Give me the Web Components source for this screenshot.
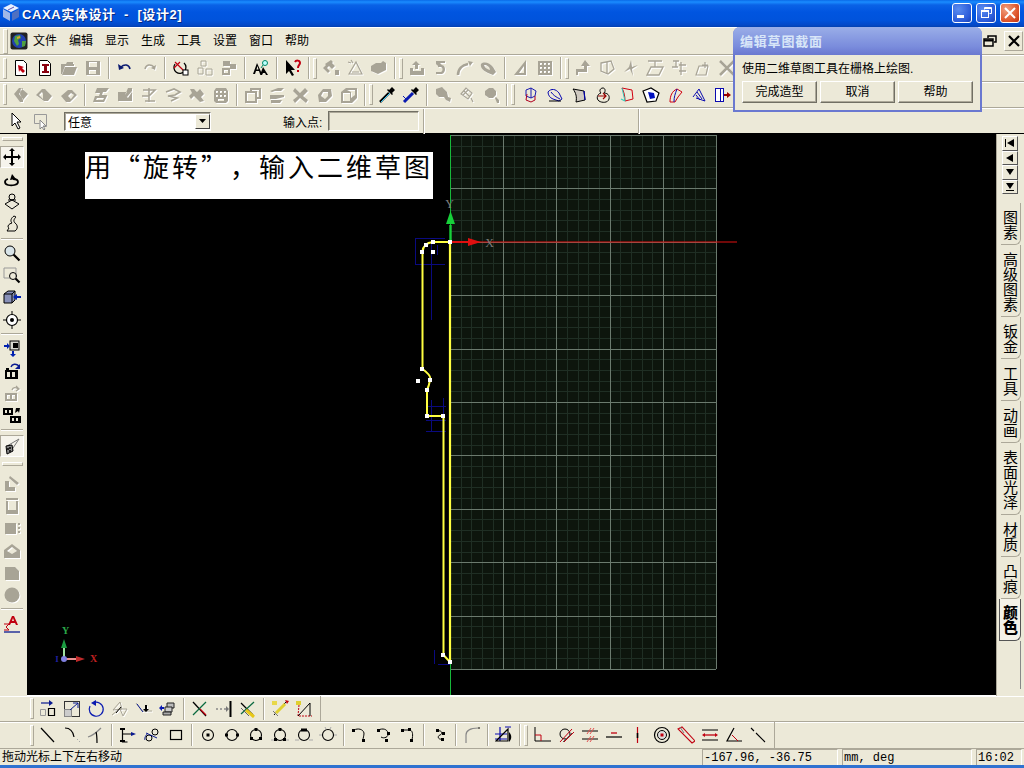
<!DOCTYPE html>
<html lang="zh-CN">
<head>
<meta charset="utf-8">
<title>CAXA实体设计</title>
<style>
html, body { margin: 0; padding: 0; background: #ece9d8; overflow: hidden; }
body { font: 12px "Liberation Sans", "Noto Sans CJK SC", sans-serif; color: #000; }
</style>
</head>
<body>
<cad-window>
  <cad-titlebar slot="top">CAXA实体设计 &nbsp;-&nbsp; [设计2]</cad-titlebar>
  <cad-menubar slot="top">
    <cad-menuitem>文件</cad-menuitem><cad-menuitem>编辑</cad-menuitem><cad-menuitem>显示</cad-menuitem><cad-menuitem>生成</cad-menuitem><cad-menuitem>工具</cad-menuitem><cad-menuitem>设置</cad-menuitem><cad-menuitem>窗口</cad-menuitem><cad-menuitem>帮助</cad-menuitem>
  </cad-menubar>
  <cad-toolbar slot="top" size="27" items="grip doc1 doc2 open save sep undo redo sep rot obj1 obj2 sep tree sep help sep grip a1 a2 a3 sep grip up a5 a6 a7 sep a8 a9 sep grip a10 a11 a12 a13 a14 a15 a16"></cad-toolbar>
  <cad-toolbar slot="top" size="26" items="grip b1 b2 b3 sep c1 c2 c3 c4 c5 c6 sep e1 e2 e3 e4 e5 sep grip drop1 drop2 sep f1 f2 f3 sep grip _2 h1 h2 h3 h4 h5 h6 h7 h8 h9"></cad-toolbar>
  <cad-inputbar slot="top"></cad-inputbar>

  <cad-toolbar slot="left" vertical items="_3 vgrip _5 !move orbit look walk sep zoom zoomw fit target sep cam1 cam2 cam3 cam4 sep _2 !light grip2 g1 g2 g3 g4 g5 g6 sep sigma"></cad-toolbar>
  <cad-viewport slot="center"><cad-note>用“旋转”，输入二维草图</cad-note></cad-viewport>
  <cad-tabs slot="right">
    <cad-tab>图素</cad-tab><cad-tab>高级图素</cad-tab><cad-tab>钣金</cad-tab><cad-tab>工具</cad-tab><cad-tab>动画</cad-tab><cad-tab>表面光泽</cad-tab><cad-tab>材质</cad-tab><cad-tab>凸痕</cad-tab><cad-tab active>颜色</cad-tab>
  </cad-tabs>

  <cad-toolbar slot="bottom" size="26" lead="30" end items="grip m1 m2 m3 m4 m5 m6 sep x1 x2 x3 sep y1 y2 _4"></cad-toolbar>
  <cad-toolbar slot="bottom" size="27" lead="30" end items="grip l1 l2 l3 sep p1 p2 p3 sep q1 q2 q3 q4 q5 q6 sep r1 r2 r3 sep r4 sep r5 sep ruler sep grip k1 k2 k3 k4 k5 k6 k7 k8 k9 k10 _4"></cad-toolbar>
  <cad-statusbar slot="bottom">拖动光标上下左右移动</cad-statusbar>

  <cad-dialog slot="float" heading="编辑草图截面">
    使用二维草图工具在栅格上绘图.
    <cad-button slot="actions">完成造型</cad-button>
    <cad-button slot="actions">取消</cad-button>
    <cad-button slot="actions">帮助</cad-button>
  </cad-dialog>
</cad-window>

<script>
const CJK = '"Liberation Sans", "Noto Sans CJK SC", sans-serif';
const G = '#a8a496';

// shorthand for the little 18x18 toolbar pictures
const s = (d, c = '#000', w = 1) => `<path d="${d}" fill="none" stroke="${c}" stroke-width="${w}"/>`;
const f = (d, c = '#000') => `<path d="${d}" fill="${c}" fill-rule="evenodd"/>`;
const g = d => f(d, G);
const gs = (d, w = 1.5) => s(d, G, w);
const page = '<path d="M3.5 1.5h8l3 3v12h-11z" fill="#fff" stroke="#000"/>';
const ring = '<circle cx="9" cy="9" r="5.5" fill="none" stroke="#000" stroke-width="1.1"/>';

const ICONS = {
  // main toolbar
  doc1: page + f('M6 6l6 2-2 1 3 3-2 2-3-3-1 2z', '#c00010'),
  doc2: page + f('M6 5h7v2h-2v5h2v2H6v-2h2V7H6z', '#8a0010'),
  open: g('M1 5h5l1-2h6v2h1v2H5l-3 8H1zM5 8h12l-3 8H2z'),
  save: g('M2 2h14v14H2zM5 3v5h8V3zM5 11v4h7v-4z'),
  undo: s('M5 8c3-3 8-3 9 2', '#0a1a70', 1.6) + f('M2 5l1 6 5-2z', '#0a1a70'),
  redo: gs('M14 8c-3-3-8-3-9 2') + g('M16 6l-1 5-4-2z'),
  rot: s('M3 5a6 6 0 1 0 9-1', '#000', 1.3) + s('M3 3l10 10M2 9l6-6', '#c00010', 1.2) + '<rect x="11" y="11" width="5" height="5" fill="#fff" stroke="#000"/>',
  obj1: gs('M5 2h5v5H5zM2 9h5v6H2zM10 10h6v6h-6z', 1),
  obj2: g('M3 2h7v5H3zM10 5h6v5h-6zM2 9h8v7H2zM4 11v3h4v-3z'),
  tree: f('M5 4L1 15h2l1-3h3l1 3h2zM4.5 10.5L5.5 7l1 3.5z') + f('M11 8l-3 8h2l1-2h2l1 2h2z') + '<circle cx="13" cy="4" r="2.5" fill="#bff" stroke="#086"/>' + s('M11 6L9 9', '#086'),
  help: f('M2 1v14l3-3 3 5 2-1-3-5h4z') + s('M11 3c1-2 5-2 5 1 0 2-2 2-2 5', '#c00010', 2) + f('M13 11h2v2h-2z', '#c00010'),
  a1: g('M9 1l2 2-1 1 3 3-3 3-3-3-2 2 3 3-2 2-5-5 3-3-1-1zM13 11h4v5h-4z'),
  a2: gs('M5 1l2 3M2 3l3 1M3 15L10 3l6 12zM6 13h7', 1.2),
  a3: g('M1 7l5-3h5l2-2 3 2v7l-8 4-7-3z'),
  up: g('M8 2l4 4H10v4H7V6H4zM2 9h3v3h8V9h3v7H2z'),
  a5: g('M4 2h9v2H8l2 2c4 1 4 7 0 9H4v-2h5c2-1 2-4 0-5H6V7L4 5z'),
  a6: gs('M2 16c0-6 4-10 10-11', 2.5) + g('M12 2l5 1-3 4z'),
  a7: g('M1 5c3-3 9-1 12 3l3 5-3 3-5-2c-4-2-8-5-7-9zM4 6c1 3 3 4 6 5 0-3-3-5-6-5z'),
  a8: g('M14 1v15H2zM12 7l-5 7h5z'),
  a9: g('M2 2h14v14H2zM4 4v2h2V4zM8 4v2h2V4zM12 4v2h2V4zM4 8v2h2V8zM8 8v2h2V8zM12 8v2h2V8zM4 12v2h2v-2zM8 12v2h2v-2zM12 12v2h2v-2z'),
  a10: g('M11 1l5 6h-3v6H4v3H2v-6h8V7H7z'),
  a11: gs('M3 4l10-2 3 8-6 5-7-3zM9 3v12', 1.3),
  a12: g('M9 1l1 7 6-2-6 4 1 7-3-7-6 3 5-5z'),
  a13: gs('M2 2h14M5 8h12l-4 8H1zM9 2v6', 1.3),
  a14: gs('M3 2h6M6 2v6M2 8h6M11 3v13M9 6h7M9 12h7', 1.3),
  a15: gs('M2 16l3-9h9l-2 9zM11 3v6M8 6h6', 1.2),
  a16: gs('M2 2l14 14M16 2L2 16', 2.5),
  b1: g('M2 8l5-6h4L7 8l4 5v3H8zM9 2l7 6-5 6-3-6z'),
  b2: g('M0 9l6-6h3l7 7-4 5H8zM6 6L3 9l4 4V8z'),
  b3: g('M1 10l7-6h4l5 5-7 7H6zM8 10l3-3 3 2-3 4z'),
  c1: g('M5 2h12l-3 4h-3l-1 3h5v1l-3 6H1l2-6h4l1-3H3zM5 12l-1 2h7l1-2z'),
  c2: g('M2 6h9L9 9l3 3 4-6v9H2zM12 2h4v3l-5 6-2-2z'),
  c3: gs('M3 4h12l-6 6H2M9 2v14M5 15h10', 1.6),
  c4: gs('M2 6l8-3 6 3-5 3-7 1 9 2-6 3', 1.7),
  c5: g('M2 3h4l3 3 3-3 4 5-3 3 3 4-4 1-6-6-3 3-2-3 3-3z'),
  c6: g('M4 2h10l2 3v10l-2 2H4l-2-2V5zM4 5v2h2V5zM8 5v2h2V5zM12 5v2h2V5zM4 9v2h2V9zM8 9v2h2V9zM12 9v2h2V9zM6 13v2h6v-2z'),
  e1: g('M1 5h5V2h11v11h-4v4H1zM8 4v1h5v6h2V4zM3 7v8h8V7z'),
  e2: g('M2 5l8-3h6l-3 3H7L4 6zM2 9h14v2l-8 2H2zM3 14h11l-2 3H3z'),
  e3: g('M3 2l5 5 5-5 3 3-5 5 5 4-2 3-6-5-5 5-2-3 5-4-5-5z'),
  e4: g('M2 9l5-6h8l1 7-6 6H3zM6 8l-1 2 4 3 3-3V6H7z'),
  e5: g('M1 6l5-4h11v10l-5 5H1zM3 7v8h7V7zM11 6v6l4-3V4H7z'),
  drop1: s('M2 16L11 7', '#000', 2.5) + s('M3 16l9-9', '#3cf', 1) + f('M11 4l3-3 3 3-3 3 1 1-1 1-5-5 1-1z'),
  drop2: s('M2 16L11 7', '#0a1ab0', 3) + f('M11 4l3-3 3 3-3 3 1 1-1 1-5-5 1-1z') + s('M1 10l4 4', '#0a1ab0'),
  f1: g('M2 3l6-2 5 5 1 5 3 1-1 4-4-2-2-3H5L2 8z'),
  f2: gs('M3 8l5-6 6 5-4 6zM6 5l6 6M5 9l5-5M13 12l2 4', 1.2),
  f3: g('M3 5l4-3h4l3 3v4l-3 3H7L3 9zM13 12l1-1 3 3v3h-2z'),
  h1: s('M4 4l5-2 5 3-1 5-4 2-5-2zM9 2v10', '#1a1ab0', 1) + s('M5 8l-1 6 5 2 4-2V10', '#b00020', 1),
  h2: s('M2 6c3-4 8-3 11 1l3 6-3 2-6-2C4 12 2 9 2 6zM5 6c2 3 5 5 9 7', '#0a0ab0', 1) + s('M3 15h12', '#000'),
  h3: '<path d="M3 3l11 2 1 9-9 2c1-5 0-9-3-13z" fill="#cfc9c0" stroke="#000"/>' + s('M14 5l1 9', '#00a', 1.2),
  h4: s('M9 2c-3 0-4 3-2 5-4 1-5 6-2 8s9 2 10-2-2-6-5-6c2-2 1-5-1-5z', '#000', 1) + s('M4 10h8M9 7l3 3-3 3', '#900', 1.2),
  h5: s('M4 2l10 2 1 9-8 2C7 10 6 6 4 2z', '#d00010', 1) + s('M3 13l4 2', '#3cb', 1.2) + s('M4 2l3 13', '#3cb'),
  h6: '<path d="M1 5l8-3 8 5-3 8-9 1z" fill="#fff" stroke="#000" stroke-width="1.2"/>' + f('M6 6l6 1 1 5-5 1z', '#0010c0'),
  h7: s('M4 16c0-6 2-11 7-13l5 3-4 5-3 5z', '#d00010', 1) + s('M8 16c0-5 1-8 3-13', '#0a0ab0', 1),
  h8: s('M3 11L9 3l6 12-9-3', '#0a0ab0', 1) + s('M6 9l4 5M7 6l5 7', '#0a0ab0', 1),
  h9: '<rect x="1.5" y="2.5" width="5" height="13" fill="#fff" stroke="#0a0ab0"/><rect x="6.5" y="2.5" width="3" height="13" fill="#fff" stroke="#0a0ab0"/>' + f('M10 8h3V6l4 3-4 3v-2h-3z', '#900'),

  // left dock
  move: f('M9 0l3 3h-2v5h5V6l3 3-3 3v-2h-5v5h2l-3 3-3-3h2v-5H3v2L0 9l3-3v2h5V3H6z'),
  orbit: s('M5 8c-4 1-4 5 0 6s10 0 10-3c0-2-2-3-5-3', '#000', 1.8) + f('M9 3l4 5-6 1z'),
  look: s('M9 1a3 3 0 0 1 0 6 3 3 0 0 1 0-6zM5 7h8M2 11l7-4 7 4-7 5z', '#000', 1),
  walk: s('M11 1C8 3 7 6 9 8c-4 1-5 4-3 5l-2 3h8c3-2 3-6 0-8-2-2-1-4 1-6z', '#000', 1),
  zoom: '<circle cx="7" cy="7" r="5" fill="#d8e4e8" stroke="#000"/>' + s('M10.5 10.5l6 6', '#000', 2.2),
  zoomw: s('M1 2h12v9', '#999') + s('M1 2v10h6', '#999') + '<circle cx="10" cy="10" r="3.5" fill="none" stroke="#000"/>' + s('M12.5 12.5l4 4', '#000', 2.2),
  fit: '<path d="M1 5l4-3h7v9l-3 3H1z" fill="#8890b8" stroke="#000"/>' + s('M1 5h8v9M9 5l3-3', '#000') + f('M10 8l4-3v2h4v2h-4v2z', '#0020b0'),
  target: s('M9 0v18M0 9h18', '#000', 1) + '<circle cx="9" cy="9" r="5.5" fill="#fff" stroke="#000" stroke-width="1.2"/><circle cx="9" cy="9" r="2" fill="#000"/>',
  cam1: '<rect x="7" y="2" width="9" height="9" fill="#d8d8d0" stroke="#000"/>' + f('M10 4h5v5h-5z') + f('M1 6h3V4l3 3-3 3V8H1zM11 12v3h2l-3 3-3-3h2v-3z', '#0020b0'),
  cam2: f('M2 8h13v9H2zM4 10v5h3v-5zM9 10v5h3v-5zM3 6h3v2H3z') + s('M8 5c1-3 5-4 8-1', '#0a1a90', 1.4) + f('M17 2v5h-5z', '#0a1a90'),
  cam3: g('M2 9h12v8H2zM4 11v4h3v-4zM9 11v4h3v-4z') + gs('M9 6c1-3 4-3 6-1M13 2l3 3-3 2', 1.3),
  cam4: f('M0 2h10v7H0zM2 4v3h2V4zM6 4v3h2V4zM7 10h11v7H7zM9 12v3h2v-3zM13 12v3h2v-3z') + f('M13 2l4 0-1 5-1-2-3 2z', '#000'),
  light: s('M16 2L4 9', '#777', 1) + s('M16 2L8 14', '#777', 1) + '<path d="M3 9l6-1 1 6-6 3z" fill="#888" stroke="#000"/>' + f('M4 11h2v2H4zM6 13h2v2H6zM6 10h2v2H6z', '#222'),
  g1: g('M2 7h4v6h6v4H2zM7 2l9 7-2 2-8-7z'),
  g2: g('M3 4h2v9h8V4h2v13H3zM3 1h12v2H3z'),
  g3: g('M2 4h11v11H2zM15 4h2v2h-2zM15 8h2v2h-2zM15 12h2v2h-2z'),
  g4: g('M1 9l8-6 8 6v8H1zM9 6L4 10l5 3 5-3z'),
  g5: g('M2 3h10l4 4v9H2z'),
  g6: '<circle cx="9" cy="9" r="7.5" fill="' + G + '"/>',
  sigma: f('M9 1h2l4 9h-2l-1-2H8l-1 2H5zM9 6h2l-1-3z', '#c00010') + s('M1 9h5L3 12l3 3H1', '#c00010', 1) + s('M1 17h16', '#0a1a90', 1.3),

  // lower toolbars
  m1: s('M2 3h10', '#0a1a90', 1.2) + f('M10 0l4 3-4 3z', '#0a1a90') + s('M1.5 9.5h5v6h-5z', '#999', 1) + s('M9.5 8.5h6v7h-6z', '#000', 1.2),
  m2: '<rect x="1.5" y="1.5" width="15" height="15" fill="none" stroke="#333"/>' + '<rect x="1.5" y="9.5" width="7" height="7" fill="#ccc" stroke="#888"/>' + s('M7 10l8-7M10 3h5v5', '#0a1a90', 1),
  m3: s('M6 3a7 7 0 1 1-3 3', '#0a1ab0', 1.2) + f('M9 0v6L4 3z', '#0a1ab0'),
  m4: gs('M2 10L9 2l2 7zM9 9h7l-4 7zM1 15l6-5', 1) + s('M5 13l5-6', '#000'),
  m5: gs('M1 3l6 8h10', 1) + s('M2 4l6 8', '#0a1a90') + f('M10 5h2v4h2l-3 3-3-3h2z', '#000') ,
  m6: '<path d="M8 3h7v5H8z" fill="#bbb" stroke="#222"/><path d="M6 7h7v5H6z" fill="#ccc" stroke="#222"/><path d="M4 12h8v3H4z" fill="#aaa" stroke="#222"/>' + f('M0 8l3-3v2h2v2H3v2z', '#0a1ab0'),
  x1: s('M2 2l13 14', '#000', 1.3) + s('M15 2L2 15', '#0a6a40', 1.3) + s('M9 9l6 6', '#c00010', 1.3),
  x2: s('M1 9h2M5 9h2M9 9h2', '#888', 1.5) + f('M11 6l3 3-3 3z', '#777') + s('M15.5 1v16', '#000', 2),
  x3: s('M2 3l12 12', '#000', 1.2) + s('M15 2L2 14', '#0a6a40', 1.2) + s('M7 10l8 7', '#e8c818', 3) + s('M2 8l8 8', '#666', 1),
  y1: s('M3 15L15 2', '#000', 1) + s('M2 11l5 5', '#777') + s('M5 13L14 4', '#e0d030', 3) + f('M14 0l4 1-2 3z', '#c00010') + f('M1 1h5v4H1z', '#e8d848'),
  y2: f('M1 1h5v4H1z', '#e0d030') + '<path d="M4 5L3 16h14" fill="none" stroke="#c00010" stroke-dasharray="2 1"/>' + s('M3 16L15 3v13', '#000', 1),
  l1: s('M2 2l13 14', '#000', 1.2),
  l2: s('M2 2c5 0 8 3 9 9', '#000', 1.2) + s('M14 13l1 1M16 15l1 1', '#aaa'),
  l3: s('M1 11c4-1 8-4 13-9', '#888', 1.2) + s('M9 6c1 3 1 6 1 11', '#000', 1.2),
  p1: s('M3.5 2v14h5M3.5 8h10', '#000', 1.2) + f('M1 2h5v2H1zM1 14h5v2H1z') + f('M12 6l5 2-5 2z', '#0a1a90'),
  p2: s('M6 9a3 3 0 1 1 0 6 3 3 0 0 1 0-6zM12 3a3 3 0 1 1 0 6 3 3 0 0 1 0-6z', '#000', 1) + s('M3 7L14 12M2 14c-1-2 1-5 3-7', '#0a1a90', 1),
  p3: '<rect x="3.5" y="4.5" width="11" height="9" fill="none" stroke="#000" stroke-width="1.2"/>',
  q1: ring + f('M7.5 7.5h3v3h-3z'),
  q2: ring + f('M2 7.5h3v3H2zM13 7.5h3v3h-3z'),
  q3: ring + f('M7.5 2h3v3h-3zM3 11h3v3H3zM12 11h3v3h-3z'),
  q4: ring + f('M7.5 2h3v3h-3zM3 12h3v3H3zM12 12h3v3h-3z') + s('M0 14h3M15 14h3', '#aaa'),
  q5: ring + f('M6 2.5h6v3H6z') + s('M0 14h4M14 14h4', '#aaa'),
  q6: ring + s('M0 9h3M15 9h3M6 1l1 2M12 1l-1 2', '#aaa'),
  r1: s('M3 4c4-2 9-1 10 3 0 3-1 5-1 7', '#000', 1) + f('M1 3h3v3H1zM11 13h3v3h-3z'),
  r2: s('M3 4c5-2 9-1 10 3s-4 6-7 4', '#000', 1) + f('M2 3h3v3H2zM12 6h3v3h-3zM10 13h3v3h-3z'),
  r3: s('M3 4h8c3 1 3 5 2 10', '#000', 1) + f('M9 2h3v3H9zM2 3h3v3H2zM11 13h3v3h-3z'),
  r4: s('M7 5c4-1 5 3 2 4s-2 5 2 4', '#000', 1) + f('M5 3h3v3H5zM11 6h3v3h-3zM10 12h3v3h-3z'),
  r5: s('M3 17V9c0-4 4-7 12-7', '#888', 1.2) + s('M15 2h2', '#000'),
  ruler: s('M0 8h12M0 13h12', '#0a0ab0', 1) + s('M5 1v14', '#0a0ab0', 1.2) + '<path d="M1 15L13 3v12z" fill="none" stroke="#000" stroke-width="1.2"/>' + f('M14 6c3 3 3 7 0 10z') + s('M10 1h6', '#0a0ab0'),
  k1: s('M2 1v14h16', '#000', 1) + s('M2 9h6v6', '#c00010', 1),
  k2: '<circle cx="8" cy="8" r="5" fill="none" stroke="#000"/>' + s('M3 16L15 3M7 16L17 6', '#c00010', 1) + s('M6 16l9-9', '#555'),
  k3: s('M1 5h16M1 13h16', '#000', 1) + s('M6 8l4-6M9 8l4-6M6 16l4-6M9 16l4-6', '#e05050', 1),
  k4: s('M1 11h16', '#000', 1.2) + s('M6 7h6', '#c00010', 1.3),
  k5: s('M8.5 1v16', '#c00010', 1.2) + s('M8.5 7v5', '#000', 1.6),
  k6: '<circle cx="9" cy="9" r="7.5" fill="none" stroke="#000" stroke-width="1.2"/><circle cx="9" cy="9" r="4.5" fill="#ddd" stroke="#000"/>' + f('M7.5 7.5h3v3h-3z', '#c00010'),
  k7: s('M1 3l4-2 13 14-3 2z', '#c00010', 1.1) + s('M3 1l4 6', '#777'),
  k8: s('M1 4h16M1 14h16', '#000', 1.2) + s('M3 9h12', '#c00010', 1.3) + f('M1 9l3-2v4zM17 9l-3-2v4z', '#c00010'),
  k9: s('M9 2L2 15h15', '#000', 1.2) + s('M7 9l6 6', '#c00010', 1),
  k10: s('M2 2l3 3M7 7l9 9', '#000', 1.1),

  cursor: '<path d="M4 1l0 13 3-3 3 6 2-1-3-6h4z" fill="#fff" stroke="#000"/>',
  cursorBox: s('M2.5 2.5h12v12h-5', '#999') + s('M2.5 2.5v9h5', '#999') + '<path d="M8 8v9l2-2 2 3 1-1-2-3h3z" fill="#fff" stroke="#888"/>',
  globe: '<rect x="0.5" y="0.5" width="17" height="17" rx="2" fill="#222"/><circle cx="9" cy="9" r="7" fill="#2040b0"/>' + f('M5 4l5-1 1 3-3 2 1 4-2 2-3-5zM12 9l4 0-1 5-3 1z', '#50a040') + f('M7 5l3-1 0 2-3 1z', '#e0a030'),
  appCube: f('M9 1l8 4-8 4-8-4z', '#e8f0ff') + f('M1 6l7 4v8l-7-4z', '#a0b8e8') + f('M17 6l-7 4v8l7-4z', '#5070c0') + s('M6 7l6-3', '#6050b0', 1)
};

function iconSvg(name, size = 18) {
  const body = ICONS[name] || '';
  const grey = body.includes(G) ? ' style="filter:drop-shadow(1px 1px 0 #fff)"' : '';
  return `<svg width="${size}" height="${size}" viewBox="0 0 18 18"${grey}>${body}</svg>`;
}

function el(name, html) {
  customElements.define(name, class extends HTMLElement {
    constructor() {
      super();
      this.attachShadow({ mode: 'open' });
      this.shadowRoot.innerHTML = html;
    }
  });
}

// outer frame: flex column, the dialog lies over it
el('cad-window', `<style>
  :host { display: flex; flex-direction: column; position: relative; width: 1024px; height: 768px; background: #ece9d8; overflow: hidden; border-bottom: 3px solid #2f72d0; box-sizing: border-box; }
  .main { flex: 1; display: flex; min-height: 0; height: 562px; }
  .center { flex: 1; min-width: 0; display: flex; }
</style>
<slot name="top"></slot>
<div class="main">
  <slot name="left"></slot>
  <div class="center"><slot name="center"></slot></div>
  <slot name="right"></slot>
</div>
<slot name="bottom"></slot>
<slot name="float"></slot>`);

el('cad-titlebar', `<style>
  :host { display: flex; align-items: center; height: 27px; box-sizing: border-box; padding: 0 2px 1px 2px; flex: none;
    background: linear-gradient(#0a6ae8 0, #1a8cff 2px, #0a62e6 5px, #0055e0 12px, #0053dc 20px, #0348c8 25px, #0240b0 27px);
    color: #fff; font: bold 13px ${CJK}; text-shadow: 1px 1px 0 #0a2a80; }
  .t { margin-left: 2px; letter-spacing: .6px; white-space: pre; }
  .ctl { margin-left: auto; display: flex; gap: 4px; margin-right: 2px; }
  .b { width: 20px; height: 20px; box-sizing: border-box; border: 1px solid #fff; border-radius: 3px; background: radial-gradient(circle at 30% 30%, #5a8cf0, #2a5ad8 70%, #1a40b0); display: flex; align-items: center; justify-content: center; }
  .x { background: radial-gradient(circle at 30% 30%, #f0a080, #e05a30 60%, #c03010); }
</style>
<span id="i"></span><span class="t"><slot></slot></span>
<div class="ctl">
  <div class="b"><svg width="14" height="14"><rect x="2" y="9" width="7" height="3" fill="#fff"/></svg></div>
  <div class="b"><svg width="14" height="14" fill="none" stroke="#fff"><path d="M5.5 3.5V1.5h7v6h-2"/><rect x="2.5" y="4.5" width="7" height="7"/><path d="M5.5 2.5h7M2.5 5.5h7"/></svg></div>
  <div class="b x"><svg width="14" height="14" fill="none" stroke="#fff" stroke-width="2"><path d="M2 2l10 10M12 2L2 12"/></svg></div>
</div>`);

el('cad-menubar', `<style>
  :host { display: flex; align-items: center; height: 28px; flex: none; box-sizing: border-box; padding-left: 3px; border-top: 1px solid #fff; border-bottom: 1px solid #aca899; background: #ece9d8; }
  .grip { width: 3px; height: 23px; border: 1px solid; border-color: #fff #aca899 #aca899 #fff; margin-right: 2px; }
  .globe { display: flex; margin-right: -1px; }
  .right { margin-left: auto; display: flex; align-items: center; gap: 5px; }
  .r { display: flex; width: 19px; height: 20px; box-sizing: border-box; align-items: center; justify-content: center; }
  .c { border: 1px solid; border-color: #fff #aca899 #aca899 #fff; margin-right: 1px; }
</style>
<div class="grip"></div>
<span class="globe" id="g"></span>
<slot></slot>
<div class="right">
  <div class="r"><svg width="14" height="14" fill="none" stroke="#000" stroke-width="1.5"><path d="M5 4V2h8v6h-2"/><path d="M1 5h9v7H1z"/><path d="M1 6.5h9" stroke-width="2"/></svg></div>
  <div class="r c"><svg width="14" height="14" fill="none" stroke="#000" stroke-width="2.2"><path d="M2 2l10 10M12 2L2 12"/></svg></div>
</div>`);

el('cad-menuitem', `<style>
  :host { display: block; width: 24px; padding: 0 6px; line-height: 18px; font-size: 12px; white-space: nowrap; }
</style><slot></slot>`);

// one docked bar; items is a list of icon names plus grip, sep and _N gaps
customElements.define('cad-toolbar', class extends HTMLElement {
  constructor() {
    super();
    this.attachShadow({ mode: 'open' });
  }
  connectedCallback() {
    const vertical = this.hasAttribute('vertical');
    const size = this.getAttribute('size') || 26;
    const lead = this.getAttribute('lead') || 0;
    const parts = this.getAttribute('items').trim().split(/\s+/).map(t => {
      if (t === 'grip') return '<i class="grip"></i>';
      if (t === 'vgrip' || t === 'grip2') return `<i class="vgrip ${t}"></i>`;
      if (t === 'sep') return '<i class="sep"></i>';
      if (t[0] === '_') return `<i style="flex:0 0 ${t.slice(1)}px"></i>`;
      const on = t[0] === '!';
      return `<b class="${on ? 'on' : ''}">${iconSvg(on ? t.slice(1) : t)}</b>`;
    }).join('');
    this.shadowRoot.innerHTML = `<style>
      :host { display: flex; flex: none; background: #ece9d8; box-sizing: border-box; ${vertical
        ? 'flex-direction: column; width: 27px; height: 562px; padding-left: 0;'
        : `height: ${size}px; align-items: stretch; padding-left: ${lead}px; border-bottom: 1px solid #aca899; box-shadow: inset 0 1px 0 #fff;`} }
      .bar { display: flex; ${vertical ? 'flex-direction: column;' : `align-items: center; ${lead ? '' : 'padding-left: 3px;'}`} ${this.hasAttribute('end') ? 'border-right: 1px solid #aca899; padding-right: 0;' : ''} }
      b { display: flex; align-items: center; justify-content: center; box-sizing: border-box; flex: none; ${vertical ? 'width: 24px; height: 22.4px;' : 'width: 24px; height: 24px;'} }
      b.on { background: #f6f4ec; border: 1px solid; border-color: #aca899 #fff #fff #aca899; }
      i { display: block; flex: none; box-sizing: border-box; }
      .grip { width: 4px; height: 21px; margin-right: 2px; border: 1px solid; border-color: #fff #aca899 #aca899 #fff; }
      .sep { ${vertical
        ? 'height: 6px; width: 22px; margin-left: 1px; background: linear-gradient(transparent 2px, #aca899 2px, #aca899 3px, #fff 3px, #fff 4px, transparent 4px);'
        : 'width: 8px; height: 22px; background: linear-gradient(90deg, transparent 3px, #aca899 3px, #aca899 4px, #fff 4px, #fff 5px, transparent 5px);'} }
      .vgrip { height: 4px; width: 21px; margin-left: 2px; border: 1px solid; border-color: #fff #aca899 #aca899 #fff; }
      .grip2 { margin-top: 5px; margin-bottom: 6px; }
    </style><div class="bar">${parts}</div>`;
  }
});

el('cad-inputbar', `<style>
  :host { display: flex; align-items: center; flex: none; height: 26px; box-sizing: border-box; background: #ece9d8; border-top: 1px solid #fff; border-bottom: 1px solid #000; font-size: 12px; }
  .i { width: 24px; display: flex; justify-content: center; }
  .combo { margin-left: 11px; width: 147px; height: 19px; box-sizing: border-box; background: #fff; border: 1px solid; border-color: #716f64 #fff #fff #716f64; box-shadow: inset 1px 1px 0 #aca899; display: flex; align-items: center; padding-left: 3px; }
  .drop { margin-left: auto; width: 15px; height: 15px; box-sizing: border-box; background: #ece9d8; border: 1px solid; border-color: #fff #404040 #404040 #fff; display: flex; align-items: center; justify-content: center; }
  .lab { margin-left: 72px; width: 45px; }
  .field { width: 91px; height: 20px; box-sizing: border-box; border: 1px solid; border-color: #716f64 #fff #fff #716f64; box-shadow: inset 1px 1px 0 #aca899; }
  .s { width: 2px; height: 25px; margin-left: 4px; border-left: 1px solid #aca899; border-right: 1px solid #fff; box-sizing: border-box; }
</style>
<div class="i" id="c1" style="margin-left:5px"></div><div class="i" id="c2"></div>
<div class="combo">任意<div class="drop"><svg width="7" height="4"><path d="M0 0h7L3.5 4z"/></svg></div></div>
<span class="lab">输入点:</span>
<div class="field"></div>
<div class="s"></div>
<div class="s" style="margin-left:213px"></div>`);

// 3D view: drawn in page coordinates so the scene matches its place on screen
customElements.define('cad-viewport', class extends HTMLElement {
  constructor() {
    super();
    this.attachShadow({ mode: 'open' });
    let minor = '', major = '';
    const X0 = 450, Y0 = 135, W = 266, H = 534;
    for (let i = 0; i <= 25; i++) {
      const x = Math.round(X0 + i * W / 25) + .5;
      const line = `<path d="M${x} ${Y0}V${Y0 + H}"/>`;
      if (i % 5) minor += line; else major += line;
    }
    for (let j = 0; j <= 50; j++) {
      const y = Math.round(Y0 + j * H / 50) + .5;
      const line = `<path d="M${X0} ${y}H${X0 + W}"/>`;
      if (j % 5) minor += line; else major += line;
    }
    const pts = [[450,242],[433,242],[426,245],[422,252],[433,252],[422,369],[418,381],[430,380],[427,390],[427,416],[443,416],[443,655],[450,662]];
    const dots = pts.map(p => `<rect x="${p[0] - 2}" y="${p[1] - 2}" width="4" height="4" fill="#fff"/>`).join('');
    this.shadowRoot.innerHTML = `<style>
      :host { display: block; position: relative; flex: 1; background: #000; overflow: hidden; box-shadow: inset 0 -1px 0 #fff; }
      svg { display: block; }
      text { font-family: "Liberation Serif", serif; }
    </style>
    <svg width="969" height="561" viewBox="27 134 969 561">
      <rect x="450" y="135" width="266" height="534" fill="#0d150d"/>
      <g stroke="#1f2e24" shape-rendering="crispEdges">${minor}</g>
      <g stroke="#6b7a6e" shape-rendering="crispEdges">${major}</g>
      <g stroke="#0a0a80" fill="none" shape-rendering="crispEdges">
        <path d="M415 238h30M415 264h30M415 238v26M431 240v80M437 245v10M426 406h20M426 420h20M426 431h20M431 400v32M443 398v34M438 664h12M434 650v14"/>
      </g>
      <path d="M450.5 135V695" stroke="#17b83a" fill="none"/>
      <path d="M450 242H737" stroke="#e01010" fill="none"/>
      <path d="M450 242V662" stroke="#ffff40" stroke-width="2.2" fill="none"/>
      <path d="M450 242H433Q423 243 422.5 252V369Q432 376 430 380Q429 386 427 390V416H443.5V655L450 662" stroke="#ffff40" stroke-width="2" fill="none"/>
      <path d="M450.5 242V225" stroke="#17d03a" stroke-width="2.4"/>
      <path d="M450.5 211l-4.5 13h9z" fill="#17d03a"/>
      <path d="M451 242h18" stroke="#e01010" stroke-width="2"/>
      <path d="M481 242l-13-4v8z" fill="#e01010"/>
      ${dots}
      <text x="449.5" y="208" text-anchor="middle" font-size="12" fill="#7a7a7a">Y</text>
      <text x="489.5" y="247" text-anchor="middle" font-size="12" fill="#7a7a7a">X</text>

      <path d="M64 659V642" stroke="#9fe0a0" stroke-width="2"/>
      <path d="M64 639l-3 9h6z" fill="#1a9a40"/>
      <path d="M64 659H80" stroke="#e89090" stroke-width="2"/>
      <path d="M85 659l-9-3v6z" fill="#c02a2a"/>
      <circle cx="64" cy="659" r="3" fill="#8080e0"/>
      <text x="65.5" y="634" text-anchor="middle" font-size="10" font-weight="bold" fill="#2aa84a">Y</text>
      <text x="93.5" y="662" text-anchor="middle" font-size="10" font-weight="bold" fill="#c02020">X</text>
      <text x="57" y="662" text-anchor="middle" font-size="9" font-weight="bold" fill="#2020a0">I</text>
    </svg>
    <slot></slot>`;
  }
});

el('cad-note', `<style>
  :host { position: absolute; left: 58px; top: 18px; width: 348px; height: 47px; box-sizing: border-box; background: #fff; color: #000; font: 26px/27px "Noto Sans CJK SC", sans-serif; letter-spacing: 3px; white-space: nowrap; text-spacing-trim: space-all; }
</style><slot></slot>`);

el('cad-tabs', `<style>
  :host { display: block; flex: none; width: 28px; height: 562px; box-sizing: border-box; background: #ece9d8; border-left: 1px solid #aca899; padding-top: 2px; }
  .nav { width: 16px; margin-left: 5px; display: flex; flex-direction: column; height: 67px; }
  .n { height: 14.5px; box-sizing: border-box; border: 1px solid; border-color: #fff #555 #555 #fff; background: #ece9d8; display: flex; align-items: center; justify-content: center; }
  .stack { display: flex; flex-direction: column; }
  .rest { height: 48px; margin-left: 4px; width: 20px; box-sizing: border-box; border-right: 1px solid #888; }
</style>
<div class="nav">
  <div class="n"><svg width="10" height="8"><path d="M1 0v8H0V0zM9 0v8L2 4z"/></svg></div>
  <div class="n"><svg width="10" height="8"><path d="M8 0v8L1 4z"/></svg></div>
  <div class="n"><svg width="10" height="8"><path d="M1 1h8L5 7z"/></svg></div>
  <div class="n"><svg width="10" height="8"><path d="M1 0h8L5 6zM1 7h8v1H1z"/></svg></div>
</div>
<div class="stack"><slot></slot></div>
<div class="rest"></div>`);

el('cad-tab', `<style>
  :host { display: block; margin-left: 4px; width: 20px; box-sizing: border-box; border: 1px solid #aca899; border-left: 0; border-top: 0; border-radius: 0 0 6px 0; padding: 7px 0 4px; writing-mode: vertical-rl; font: 15px/19px "Noto Sans CJK SC", sans-serif; text-align: center; background: #ece9d8; }
  :host([active]) { margin-left: 2px; width: 22px; font-weight: 900; background: #f4f2e8; border: 1px solid #555; border-top: 0; padding: 6px 0 5px; }
</style><slot></slot>`);

el('cad-statusbar', `<style>
  :host { display: flex; flex: none; height: 16px; box-sizing: border-box; font-size: 12px; line-height: 16px; white-space: nowrap; padding-left: 2px; overflow: hidden; background: #ece9d8; }
  .msg { flex: 1; }
  .f { box-sizing: border-box; border: 1px solid; border-color: #aca899 #fff #fff #aca899; border-bottom: 0; padding-left: 1px; font-family: "Liberation Mono", monospace; line-height: 17px; margin-right: 4px; }
</style>
<span class="msg"><slot></slot></span>
<span class="f" style="width:136px">-167.96, -36.75</span>
<span class="f" style="width:130px">mm, deg</span>
<span class="f" style="width:46px;margin-right:2px">16:02</span>`);

customElements.define('cad-dialog', class extends HTMLElement {
  constructor() {
    super();
    this.attachShadow({ mode: 'open' });
    this.shadowRoot.innerHTML = `<style>
      :host { position: absolute; left: 733px; top: 27px; width: 249px; height: 85px; box-sizing: border-box; background: #ece9d8; border: 2px solid #6a78d0; border-top: 0; border-radius: 7px 7px 0 0; font-size: 12px; }
      .h { height: 28px; margin: 0 -2px; background: linear-gradient(#9aaee8, #7a8cdc 70%, #6a78d0); border-radius: 7px 7px 0 0; color: #d8e6f8; font: bold 13px/28px "Noto Sans CJK SC", sans-serif; padding-left: 7px; letter-spacing: .8px; }
      .b { padding: 5px 0 0 7px; line-height: 18px; }
      .a { display: flex; gap: 3px; margin-top: 3px; }
    </style>
    <div class="h">${this.getAttribute('heading')}</div>
    <div class="b"><slot></slot><div class="a"><slot name="actions"></slot></div></div>`;
  }
});

el('cad-button', `<style>
  :host { display: block; width: 75px; height: 22px; box-sizing: border-box; text-align: center; line-height: 20px; font-size: 12px; background: #ece9d8; border: 1px solid; border-color: #fff #716f64 #716f64 #fff; box-shadow: inset -1px -1px 0 #aca899; }
</style><slot></slot>`);

// fill the icon holders that sit inside static templates
document.querySelector('cad-titlebar').shadowRoot.getElementById('i').innerHTML = iconSvg('appCube');
document.querySelector('cad-menubar').shadowRoot.getElementById('g').innerHTML = iconSvg('globe');
const bar = document.querySelector('cad-inputbar').shadowRoot;
bar.getElementById('c1').innerHTML = iconSvg('cursor');
bar.getElementById('c2').innerHTML = iconSvg('cursorBox');
</script>
</body>
</html>
